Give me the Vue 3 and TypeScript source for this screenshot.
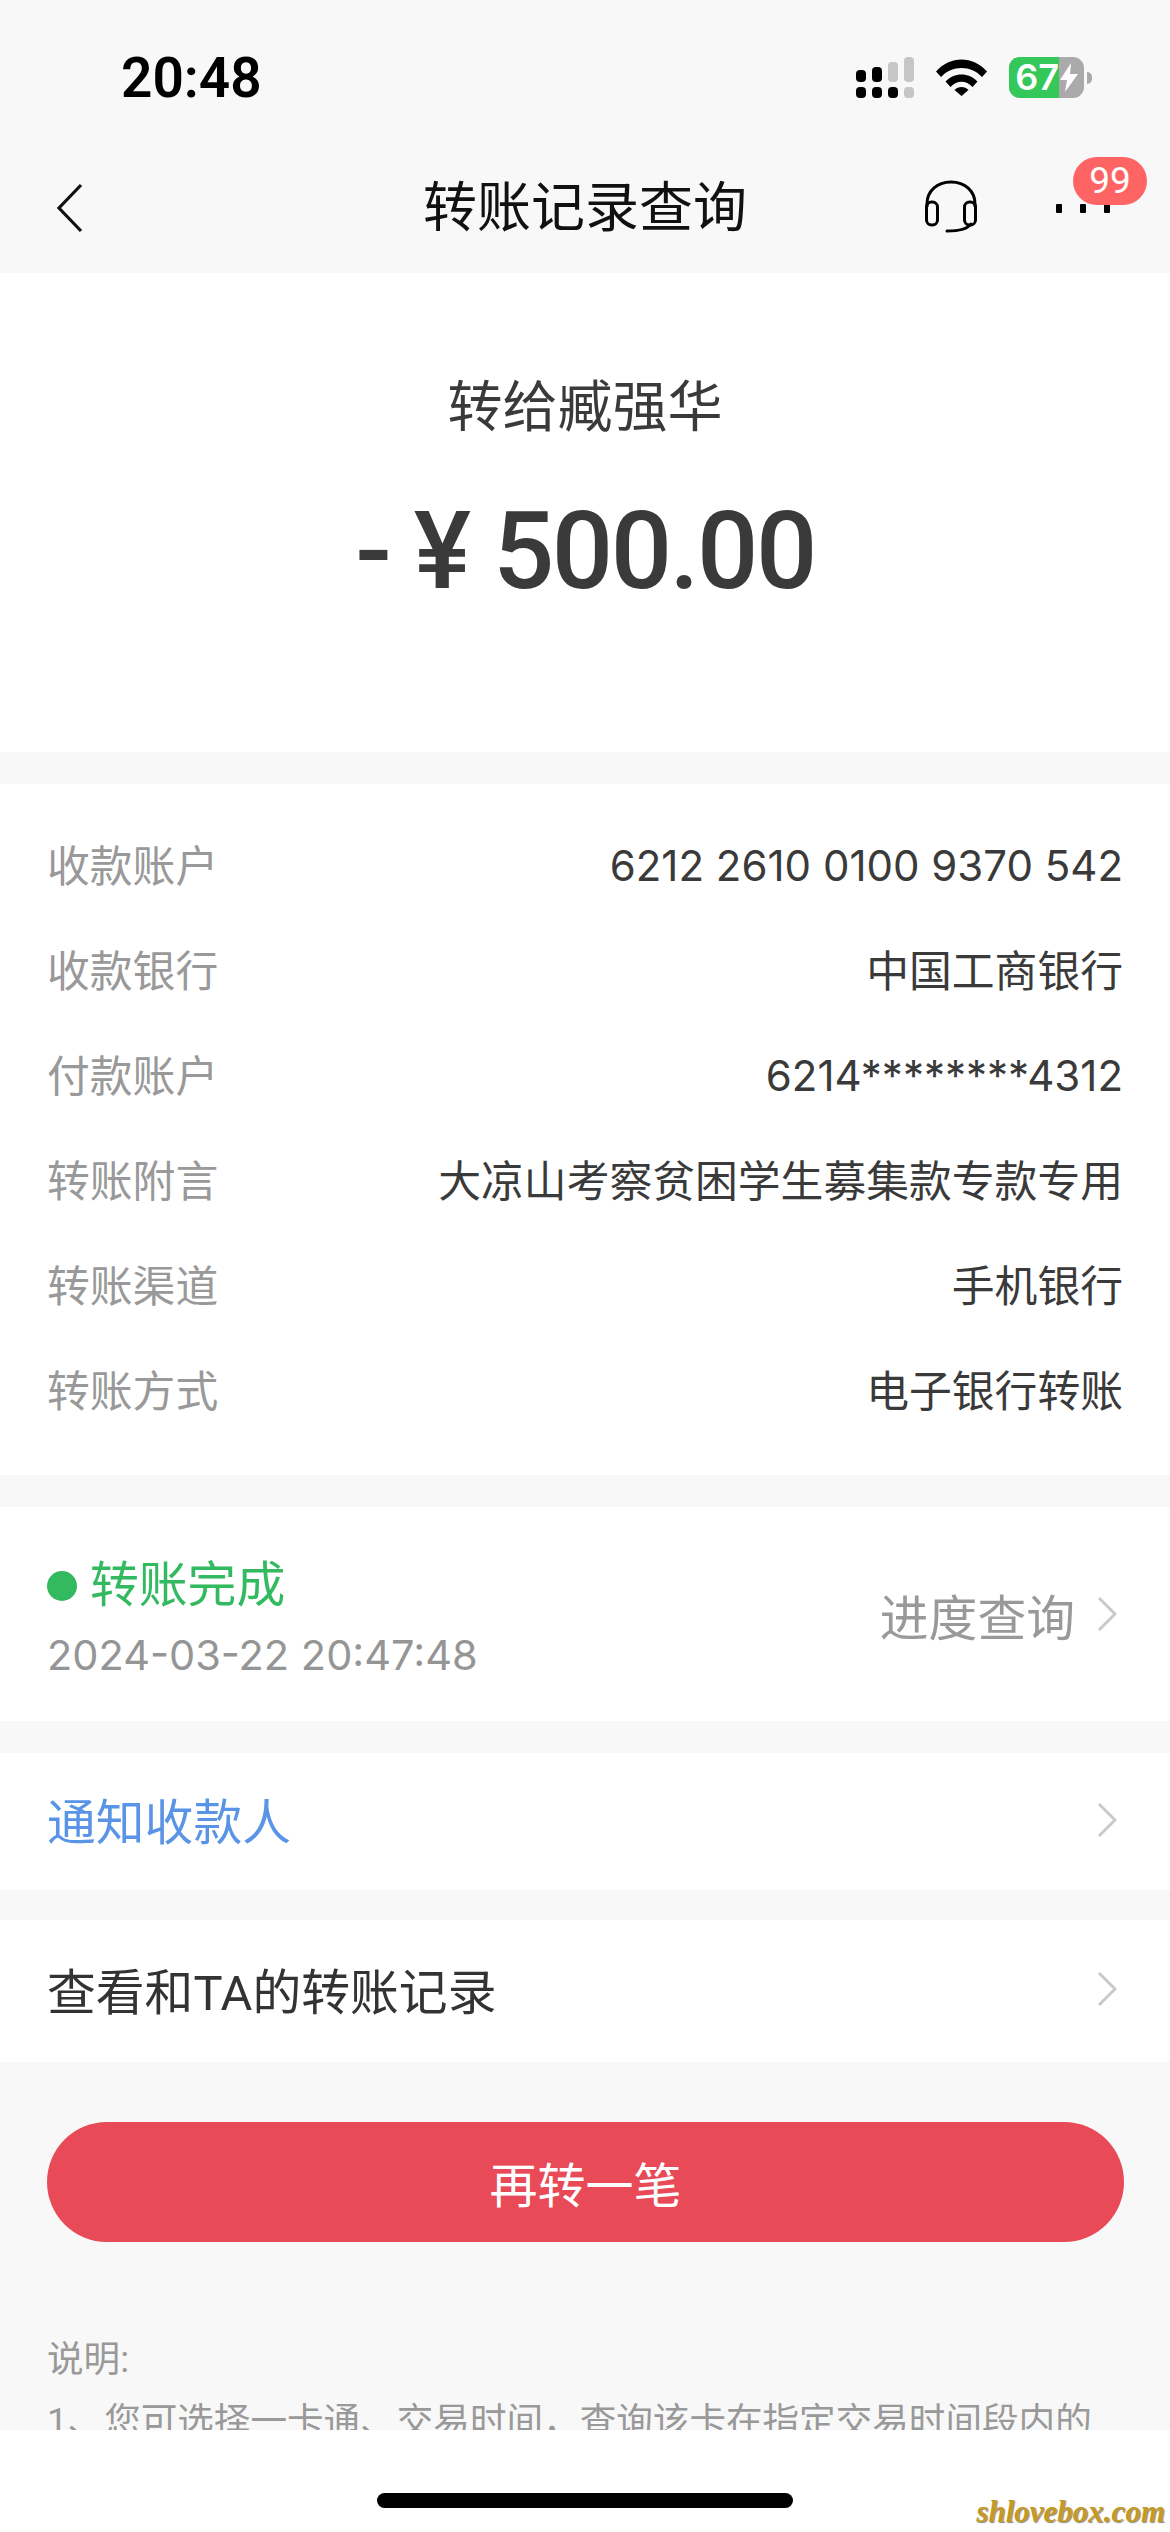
<template>
  <div class="page">
    <div class="top">
      <div class="status-bar">
        <span class="time">20:48</span>
        <div class="status-icons">
          <svg class="signal" width="58" height="41" viewBox="0 0 58 41">
            <rect x="0" y="13" width="10" height="12" rx="4" fill="#000" />
            <rect x="16" y="10" width="10" height="15" rx="4" fill="#000" />
            <rect x="32" y="5" width="10" height="20" rx="4" fill="#c6c6c6" />
            <rect x="48" y="0" width="10" height="25" rx="4" fill="#c6c6c6" />
            <rect x="0" y="30" width="10" height="11" rx="4" fill="#000" />
            <rect x="16" y="30" width="10" height="11" rx="4" fill="#000" />
            <rect x="32" y="30" width="10" height="11" rx="4" fill="#000" />
            <rect x="48" y="30" width="10" height="11" rx="4" fill="#c6c6c6" />
          </svg>
          <svg class="wifi" width="51" height="37" viewBox="0 0 51 37">
            <path d="M0 12.5C14-3.5 37-3.5 51 12.5L46 18C35 6 16 6 5 18Z" fill="#000" />
            <path d="M9.5 22.5C18 13 33 13 41.5 22.5L36.5 28C30 21 21 21 14.5 28Z" fill="#000" />
            <path d="M18.5 31C22 27 29 27 32.5 31L25.5 37Z" fill="#000" />
          </svg>
          <div class="battery">
            <div class="battery-body">
              <span class="battery-fill">67</span>
              <svg class="bolt" width="18" height="29" viewBox="0 0 18 29">
                <path d="M11 0 0 17H7L5 29 18 11H10Z" fill="#fff" />
              </svg>
            </div>
            <span class="battery-cap"></span>
          </div>
        </div>
      </div>
      <div class="nav-bar">
        <svg class="back" width="28" height="50" viewBox="0 0 28 50">
          <path d="M26 2 4 25 26 48" fill="none" stroke="#111" stroke-width="3.2" />
        </svg>
        <h1 class="nav-title">转账记录查询</h1>
        <div class="nav-actions">
          <svg class="headset" width="54" height="54" viewBox="0 0 54 54">
            <path d="M3 27V24C3 11 13 2 27 2S51 11 51 24V27" fill="none" stroke="#000" stroke-width="3" />
            <rect x="2.5" y="22" width="11" height="23" rx="5" fill="none" stroke="#000" stroke-width="3" />
            <rect x="40.5" y="22" width="11" height="23" rx="5" fill="none" stroke="#000" stroke-width="3" />
            <path d="M23 51C33 51 43 50 47 44" fill="none" stroke="#000" stroke-width="3" stroke-linecap="round" />
          </svg>
          <div class="more">
            <i></i><i></i><i></i>
            <span class="badge">99</span>
          </div>
        </div>
      </div>
    </div>

    <div class="scroll">
      <section class="summary">
        <div class="payee">转给臧强华</div>
        <div class="amount">- ¥ 500.00</div>
      </section>

      <section class="details">
        <div v-for="row in rows" :key="row.label" class="detail-row">
          <span class="detail-label">{{ row.label }}</span>
          <span class="detail-value" :class="{ num: /^\d/.test(row.value) }">{{ row.value }}</span>
        </div>
      </section>

      <section class="status-card">
        <div class="status-info">
          <div class="status-line"><i class="dot"></i>转账完成</div>
          <div class="status-date">2024-03-22 20:47:48</div>
        </div>
        <div class="link-right">
          <span class="progress">进度查询</span>
          <svg class="chevron" width="20" height="36" viewBox="0 0 20 36">
            <path d="M2 2 18 18 2 34" fill="none" stroke="#c9c9c9" stroke-width="3" />
          </svg>
        </div>
      </section>

      <section class="link-row notify">
        <span class="notify-text">通知收款人</span>
        <svg class="chevron" width="20" height="36" viewBox="0 0 20 36">
          <path d="M2 2 18 18 2 34" fill="none" stroke="#c9c9c9" stroke-width="3" />
        </svg>
      </section>

      <section class="link-row history">
        <span>查看和TA的转账记录</span>
        <svg class="chevron" width="20" height="36" viewBox="0 0 20 36">
          <path d="M2 2 18 18 2 34" fill="none" stroke="#c9c9c9" stroke-width="3" />
        </svg>
      </section>

      <button class="again">再转一笔</button>

      <div class="notes">
        <p>说明:</p>
        <p>1、您可选择一卡通、交易时间&#65292;查询该卡在指定交易时间段内的</p>
      </div>
    </div>

    <div class="footer">
      <span class="home-bar"></span>
      <span class="watermark">shlovebox.com</span>
    </div>
  </div>
</template>

<script setup lang="ts">
// 明细行
const rows: Array<{ label: string; value: string }> = [
  { label: '收款账户', value: '6212 2610 0100 9370 542' },
  { label: '收款银行', value: '中国工商银行' },
  { label: '付款账户', value: '6214********4312' },
  { label: '转账附言', value: '大凉山考察贫困学生募集款专款专用' },
  { label: '转账渠道', value: '手机银行' },
  { label: '转账方式', value: '电子银行转账' }
]
</script>

<style>
html,
body {
  margin: 0;
  background: #fff;
}
</style>

<style scoped>
.page {
  position: relative;
  width: 1170px;
  height: 2532px;
  display: flex;
  flex-direction: column;
  overflow: hidden;
  background: #f8f8f8;
  color: #333;
  font-family: Roboto, "Noto Sans CJK SC", sans-serif;
}

.top {
  height: 273px;
  flex: none;
}

.status-bar {
  height: 135px;
  padding: 57px 78px 0 121px;
  box-sizing: border-box;
  display: flex;
  justify-content: space-between;
  align-items: flex-start;
}

.time {
  font-size: 55px;
  font-weight: 600;
  line-height: 42px;
  color: #000;
}

.status-icons {
  display: flex;
  align-items: flex-start;
  gap: 22px;
}

.wifi {
  margin-top: 2px;
}

.battery {
  display: flex;
  align-items: center;
  gap: 3px;
}

.battery-body {
  width: 75px;
  height: 41px;
  border-radius: 11px;
  display: flex;
  background: #aaa;
  align-items: center;
}

.battery-fill {
  width: 50px;
  height: 41px;
  flex: none;
  border-radius: 11px 0 0 11px;
  background: #34c759;
  color: #fff;
  font-family: Inter, sans-serif;
  font-size: 36px;
  font-weight: 600;
  line-height: 41px;
  text-align: right;
}

.bolt {
  margin-left: 1px;
}

.battery-cap {
  width: 5px;
  height: 12px;
  border-radius: 0 6px 6px 0;
  background: #aaa;
}

.nav-bar {
  height: 138px;
  display: grid;
  grid-template-columns: 1fr auto 1fr;
  align-items: center;
  padding: 0 60px;
}

.back {
  display: block;
  margin: 8px 0 0 -5px;
}

.nav-title {
  margin: 10px 0 0;
  font-size: 54px;
  font-weight: 400;
  line-height: 70px;
  color: #111;
}

.nav-actions {
  display: flex;
  justify-content: flex-end;
  align-items: center;
  gap: 78px;
}

.headset {
  display: block;
  margin-top: 6px;
}

.more {
  position: relative;
  width: 54px;
  display: flex;
  justify-content: space-between;
  margin-top: 8px;
}

.more i {
  width: 6px;
  height: 9px;
  border-radius: 1px;
  background: #000;
}

.badge {
  position: absolute;
  left: 17px;
  bottom: 8px;
  width: 74px;
  height: 48px;
  border-radius: 24px;
  background: #ff6464;
  color: #fff;
  font-size: 37px;
  line-height: 48px;
  text-align: center;
}

.scroll {
  flex: 1;
  min-height: 0;
  overflow: hidden;
}

.summary {
  height: 479px;
  background: #fff;
  box-sizing: border-box;
  padding-top: 94px;
  text-align: center;
}

.payee {
  font-size: 55px;
  line-height: 80px;
  color: #3a3a3a;
}

.amount {
  margin-top: 44px;
  font-size: 108px;
  font-weight: 500;
  line-height: 120px;
  color: #3a3a3a;
  letter-spacing: -2.5px;
}

.details {
  margin-top: 32px;
  height: 691px;
  box-sizing: border-box;
  padding-top: 26px;
  background: #fff;
}

.detail-row {
  height: 105px;
  padding: 0 47px;
  display: flex;
  justify-content: space-between;
  align-items: center;
  font-size: 42.8px;
}

.detail-label {
  color: #999;
}

.detail-value {
  color: #3a3a3a;
  font-family: Inter, "Noto Sans CJK SC", sans-serif;
}

.detail-value.num {
  font-size: 42px;
  margin-top: 5px;
}

.status-card {
  margin-top: 32px;
  height: 214px;
  background: #fff;
  padding: 0 47px;
  box-sizing: border-box;
  display: flex;
  justify-content: space-between;
  align-items: center;
}

.status-info {
  margin-top: 9px;
}

.status-line {
  display: flex;
  align-items: center;
  gap: 13px;
  color: #33b960;
  font-size: 48.8px;
  line-height: 64px;
}

.dot {
  width: 30px;
  height: 30px;
  border-radius: 50%;
  background: #33b960;
}

.status-date {
  margin-top: 9px;
  font-family: Inter, sans-serif;
  font-size: 41.5px;
  line-height: 56px;
  color: #959595;
}

.link-right {
  display: flex;
  align-items: center;
  gap: 22px;
}

.progress {
  font-size: 48.8px;
  color: #999;
}

.chevron {
  display: block;
  flex: none;
  margin-right: 6px;
}

.link-row {
  margin-top: 32px;
  padding: 0 47px;
  background: #fff;
  display: flex;
  justify-content: space-between;
  align-items: center;
  font-size: 48.8px;
}

.link-row span {
  margin-bottom: 6px;
}

.link-row .chevron {
  margin-bottom: 4px;
}

.notify {
  height: 137px;
}

.notify-text {
  color: #5a94e6;
}

.history {
  margin-top: 30px;
  height: 142px;
  color: #333;
}

.again {
  display: block;
  width: 1077px;
  height: 120px;
  margin: 60px 47px 0;
  padding: 0;
  border: none;
  border-radius: 60px;
  background: #e84a58;
  color: #fff;
  font-family: inherit;
  font-size: 48px;
}

.notes {
  padding: 87px 47px 0;
  font-size: 36.6px;
  line-height: 62px;
  color: #999;
}

.notes p {
  margin: 0;
  white-space: nowrap;
}

.footer {
  position: relative;
  flex: none;
  height: 102px;
  background: #fff;
}

.home-bar {
  position: absolute;
  left: 377px;
  top: 63px;
  width: 416px;
  height: 15px;
  border-radius: 8px;
  background: #000;
}

.watermark {
  position: absolute;
  right: 5px;
  bottom: 2px;
  font-family: "Liberation Serif", serif;
  font-size: 31px;
  font-style: italic;
  font-weight: 700;
  color: #c49a22;
  text-shadow: 1px 1px 1px #888;
}
</style>
